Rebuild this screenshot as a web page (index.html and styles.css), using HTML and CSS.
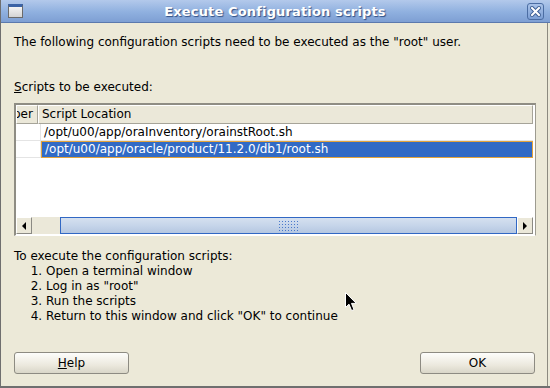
FILE: index.html
```html
<!DOCTYPE html>
<html lang="en">
<head>
  <meta charset="UTF-8" />
  <title>Execute Configuration scripts</title>
  <link rel="stylesheet" href="styles.css">
</head>
<body>
  <div class="frame">
    <div class="titlebar">
      <span class="win-icon"></span>
      <span class="title">Execute Configuration scripts</span>
      <span class="close-btn">
        <svg width="11" height="11" viewBox="0 0 11 11">
          <path d="M2 2 L9 9 M9 2 L2 9" stroke="#3d5f95" stroke-width="4" stroke-linecap="square" />
          <path d="M2 2 L9 9 M9 2 L2 9" stroke="#ffffff" stroke-width="2" stroke-linecap="square" />
        </svg>
      </span>
    </div>

    <div class="client">
      <p class="intro">The following configuration scripts need to be executed as the "root" user.</p>
      <div class="label"><u>S</u>cripts to be executed:</div>

      <div class="scrollpane">
        <div class="table">
          <div class="row head">
            <div class="cell num">per</div>
            <div class="cell loc">Script Location</div>
          </div>
          <div class="row">
            <div class="cell num"></div>
            <div class="cell loc">/opt/u00/app/oraInventory/orainstRoot.sh</div>
          </div>
          <div class="row selected">
            <div class="cell num"></div>
            <div class="cell loc">/opt/u00/app/oracle/product/11.2.0/db1/root.sh</div>
          </div>
        </div>
        <div class="hscroll">
          <div class="arrow left"><span></span></div>
          <div class="track">
            <div class="thumb"><span class="grip"></span></div>
          </div>
          <div class="arrow right"><span></span></div>
        </div>
      </div>

      <div class="instructions">
        <div>To execute the configuration scripts:</div>
        <ol>
          <li>Open a terminal window</li>
          <li>Log in as "root"</li>
          <li>Run the scripts</li>
          <li>Return to this window and click "OK" to continue</li>
        </ol>
      </div>

      <div class="buttons">
        <button class="btn"><u>H</u>elp</button>
        <button class="btn">OK</button>
      </div>
    </div>

    <svg class="cursor" width="13" height="20" viewBox="0 0 13 20">
      <path d="M0.5 0.5 L0.5 15.5 L4 12.2 L6.6 18.6 L9 17.6 L6.5 11.4 L11.3 11.4 Z" fill="#000" stroke="#fff" stroke-width="1" />
    </svg>
  </div>
</body>
</html>
```

FILE: styles.css
```css
body {
  margin: 0;
  background: #ece9d8;
  font-family: 'DejaVu Sans', sans-serif;
  font-size: 12px;
  color: #000;
}

.frame {
  position: relative;
  width: 549px;
  height: 386px;
  background: #ece9d8;
  border-left: 1px solid #6f6f6f;
  border-bottom: 2px solid #6f6f6f;
  overflow: hidden;
}

.titlebar {
  height: 22px;
  display: flex;
  align-items: center;
  padding: 0 6px 0 7px;
  background: linear-gradient(#b3c9eb, #8fb0df 55%, #7e9fd3);
  border-bottom: 1px solid #5b79ad;
}

.win-icon {
  width: 13px;
  height: 10px;
  border: 1px solid #6b6b6b;
  border-top: 3px solid #3b63a6;
  background: linear-gradient(#f4f4f4, #d4d4d4);
}

.title {
  flex: 1;
  text-align: center;
  font-weight: bold;
  font-size: 13px;
  color: #fff;
  text-shadow: 1px 1px 1px #304f84;
  letter-spacing: 0.15px;
}

.close-btn {
  width: 15px;
  height: 15px;
  border: 1px solid #4b6da3;
  border-radius: 3px;
  background: linear-gradient(#a9c2e8, #7c9fd5);
  display: flex;
  align-items: center;
  justify-content: center;
}

.client {
  margin-right: 2px;
  height: 363px;
  border-right: 1px solid #8c8a80;
  padding: 12px 11px 0 13px;
  box-sizing: border-box;
}

.intro {
  margin: 0;
  line-height: 15px;
}

.label {
  margin-top: 30px;
  line-height: 15px;
}

.scrollpane {
  margin-top: 8px;
  height: 133px;
  border: 1px solid #9d9b90;
  border-top: 2px solid #8f8d84;
  border-left: 2px solid #8f8d84;
  border-bottom-color: #fff;
  background: #fff;
  display: flex;
  flex-direction: column;
  box-sizing: border-box;
  padding-right: 2px;
}

.table {
  flex: 1;
}

.row {
  display: flex;
  height: 17px;
}

.row .cell {
  line-height: 16px;
  border-bottom: 1px solid #e4e4e4;
  padding-left: 3px;
  white-space: nowrap;
  overflow: hidden;
}

.cell.num {
  width: 21px;
  border-right: 1px solid #e4e4e4;
}

.cell.loc {
  flex: 1;
}

.row.head {
  height: 19px;
}

.row.head .cell {
  line-height: 17px;
  background: #ebe8d9;
  border: 1px solid #a6a499;
  border-top-color: #fff;
  border-left-color: #fff;
}

.row.head .cell.num {
  width: 20px;
  padding-left: 0;
  text-indent: -4px;
}

.row.selected .cell.loc {
  background: #316ac5;
  color: #fff;
  border: 1px solid #e3a33b;
  line-height: 14px;
}

.hscroll {
  display: flex;
  height: 17px;
  margin-bottom: 1px;
}

.arrow {
  width: 16px;
  border: 1px solid #8b8a84;
  border-top-color: #fff;
  border-left-color: #fff;
  background: #ebe8d9;
  box-sizing: border-box;
  display: flex;
  align-items: center;
  justify-content: center;
}

.arrow span {
  width: 0;
  height: 0;
  border-top: 4px solid transparent;
  border-bottom: 4px solid transparent;
}

.arrow.left span {
  border-right: 4px solid #000;
}

.arrow.right span {
  border-left: 4px solid #000;
}

.track {
  flex: 1;
  background: #ebe8d9;
  padding-left: 28px;
  display: flex;
}

.thumb {
  flex: 1;
  border: 1px solid #3168c4;
  background: linear-gradient(#d5e0ef, #c6d5ea 50%, #b5c7e1);
  display: flex;
  align-items: center;
  justify-content: center;
}

.grip {
  width: 22px;
  height: 11px;
  background-image: radial-gradient(circle, #3c6fc7 0.7px, transparent 0.9px);
  background-size: 3px 3px;
  opacity: 0.9;
}

.instructions {
  margin-top: 13px;
  line-height: 15px;
}

.instructions ol {
  margin: 0;
  padding-left: 32px;
}

.buttons {
  margin-top: 28px;
  display: flex;
  justify-content: space-between;
  padding-right: 1px;
}

.btn {
  width: 115px;
  height: 22px;
  font-family: 'DejaVu Sans', sans-serif;
  font-size: 12px;
  color: #000;
  border: 1px solid #8d8b82;
  border-radius: 3px;
  background: linear-gradient(#fdfdfb, #ece9de 60%, #d9d6c8);
  padding: 0;
}

.cursor {
  position: absolute;
  left: 344px;
  top: 292px;
}
```
